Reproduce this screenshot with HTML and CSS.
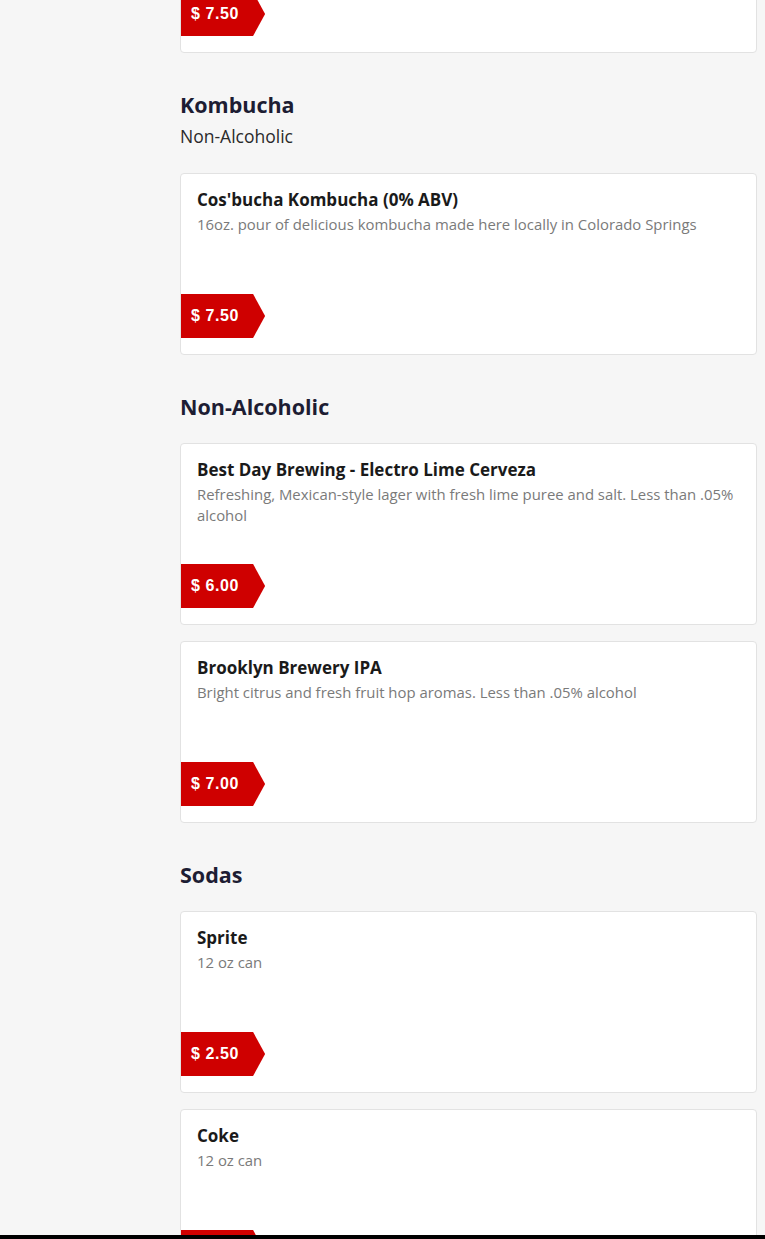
FILE: index.html
```html
<!DOCTYPE html>
<html lang="en">
<head>
<meta charset="utf-8">
<title>Menu</title>
<link rel="stylesheet" href="styles.css">
</head>
<body>
<div class="layout">
  <aside class="sidebar"></aside>
  <main class="menu">
    <section class="section section-first">
      <div class="card">
        <h3 class="item-title">Cold Brew Coffee</h3>
        <p class="item-desc">House cold brew</p>
        <div class="price"><span>$ 7.50</span></div>
      </div>
    </section>

    <section class="section">
      <header class="section-head">
        <h2 class="section-title">Kombucha</h2>
        <p class="section-sub">Non-Alcoholic</p>
      </header>
      <div class="card">
        <h3 class="item-title">Cos'bucha Kombucha (0% ABV)</h3>
        <p class="item-desc">16oz. pour of delicious kombucha made here locally in Colorado Springs</p>
        <div class="price"><span>$ 7.50</span></div>
      </div>
    </section>

    <section class="section">
      <header class="section-head">
        <h2 class="section-title">Non-Alcoholic</h2>
      </header>
      <div class="card">
        <h3 class="item-title">Best Day Brewing - Electro Lime Cerveza</h3>
        <p class="item-desc">Refreshing, Mexican-style lager with fresh lime puree and salt. Less than .05% alcohol</p>
        <div class="price"><span>$ 6.00</span></div>
      </div>
      <div class="card">
        <h3 class="item-title">Brooklyn Brewery IPA</h3>
        <p class="item-desc">Bright citrus and fresh fruit hop aromas. Less than .05% alcohol</p>
        <div class="price"><span>$ 7.00</span></div>
      </div>
    </section>

    <section class="section">
      <header class="section-head">
        <h2 class="section-title">Sodas</h2>
      </header>
      <div class="card">
        <h3 class="item-title">Sprite</h3>
        <p class="item-desc">12 oz can</p>
        <div class="price"><span>$ 2.50</span></div>
      </div>
      <div class="card">
        <h3 class="item-title">Coke</h3>
        <p class="item-desc">12 oz can</p>
        <div class="price"><span>$ 2.50</span></div>
      </div>
    </section>
  </main>
</div>
<div class="bottom-bar"></div>
</body>
</html>
```

FILE: styles.css
```css
* { box-sizing: border-box; }

html, body {
  margin: 0;
  padding: 0;
  background: #f6f6f6;
}

body {
  font-family: "Open Sans", "Noto Sans", "Liberation Sans", sans-serif;
  color: #222;
  padding: 0 8px;
}

.layout {
  display: grid;
  grid-template-columns: 172px 1fr;
}

.menu {
  display: flex;
  flex-direction: column;
  margin-top: -129px;
  padding-bottom: 40px;
}

.section {
  display: flex;
  flex-direction: column;
  gap: 16px;
  margin-top: 37px;
}

.section-first { margin-top: 0; }

.section-head {
  display: flex;
  flex-direction: column;
  margin-bottom: 5px;
}

.section-title {
  margin: 0;
  font-size: 21.5px;
  line-height: 30px;
  font-weight: 700;
  color: #1d1d33;
}

.section-sub {
  margin: 4px 0 4px;
  font-size: 17.5px;
  line-height: 24px;
  color: #2a2a2a;
}

.card {
  display: flex;
  flex-direction: column;
  min-height: 182px;
  background: #fff;
  border: 1px solid #e2e2e2;
  border-radius: 4px;
  padding: 15px 0 16px 0;
}

.item-title {
  margin: 1px 16px 4px;
  font-size: 17px;
  line-height: 20px;
  font-weight: 700;
  color: #1a1a1a;
}

.item-desc {
  margin: 0 16px;
  font-size: 14.9px;
  line-height: 21px;
  font-weight: 400;
  color: #7a7a7a;
}

.price {
  margin-top: auto;
  align-self: flex-start;
  display: flex;
  align-items: center;
  height: 44px;
  padding: 0 26px 0 10px;
  background: #cf0000;
  clip-path: polygon(0 0, calc(100% - 12px) 0, 100% 50%, calc(100% - 12px) 100%, 0 100%);
}

.price span {
  color: #fff;
  font-family: "Liberation Sans", Arial, sans-serif;
  font-weight: 700;
  font-size: 16px;
  letter-spacing: 0.6px;
}

.bottom-bar {
  position: fixed;
  left: 0;
  right: 0;
  bottom: 0;
  height: 4px;
  background: #000;
}
```
